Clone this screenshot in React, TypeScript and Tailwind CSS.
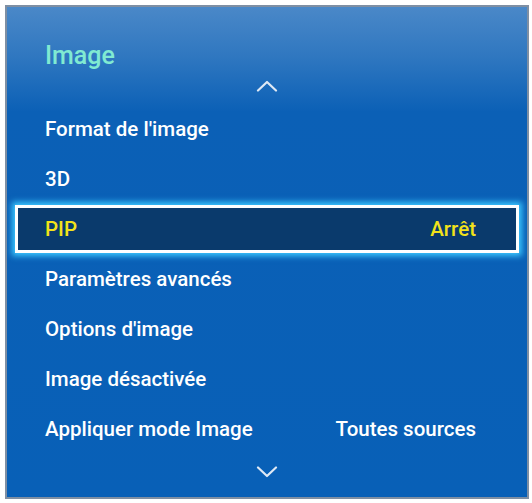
import React from 'react';

interface MenuItem {
  label: string;
  value?: string;
  selected?: boolean;
}

const items: MenuItem[] = [
  { label: "Format de l'image" },
  { label: '3D' },
  { label: 'PIP', value: 'Arrêt', selected: true },
  { label: 'Paramètres avancés' },
  { label: "Options d'image" },
  { label: 'Image désactivée' },
  { label: 'Appliquer mode Image', value: 'Toutes sources' },
];

const Chevron = ({ up }: { up?: boolean }) => (
  <svg width="22" height="12" viewBox="0 0 22 12" fill="none">
    <path
      d={up ? 'M2 10.5 L11 2 L20 10.5' : 'M2 1.5 L11 10 L20 1.5'}
      stroke="#dfe9f5"
      strokeWidth="2.2"
      strokeLinecap="round"
      strokeLinejoin="round"
    />
  </svg>
);

export default function App() {
  return (
    <div className="w-[532px] h-[503px] bg-white p-[5px]" style={{ fontFamily: 'Roboto, "Noto Sans", sans-serif' }}>
      <div className="w-[524px] h-[494px] border-2 border-[#7f8fa3] bg-[linear-gradient(to_bottom,#4a88c8_0px,#2f77c0_50px,#0b60b6_105px,#0860b7_100%)] flex flex-col">
        <div className="pl-[38px] pt-[36px] h-[66px] text-[25px] font-medium leading-none text-[#80ead2]">
          Image
        </div>
        <div className="flex justify-center h-[31px] items-start pt-[7px]">
          <Chevron up />
        </div>
        <div className="flex flex-col">
          {items.map((item, i) =>
            item.selected ? (
              <div key={i} className="h-[50px] px-[8px] flex items-center">
                <div className="w-full h-[48px] border-[3px] border-white bg-[#0a3a6c] shadow-[0_0_6px_3px_#3cc8ff] flex items-center justify-between pl-[27px] pr-[40px] text-[20.5px] font-medium text-[#f2e21a]">
                  <span>{item.label}</span>
                  <span>{item.value}</span>
                </div>
              </div>
            ) : (
              <div key={i} className="h-[50px] flex items-center justify-between pl-[38px] pr-[51px] text-[20.5px] font-medium text-white">
                <span>{item.label}</span>
                {item.value && <span>{item.value}</span>}
              </div>
            )
          )}
        </div>
        <div className="flex justify-center pt-[12px]">
          <Chevron />
        </div>
      </div>
    </div>
  );
}
